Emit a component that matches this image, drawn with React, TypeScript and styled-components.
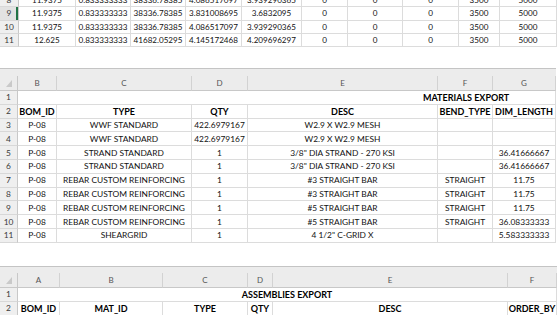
import React from 'react';
import styled, { createGlobalStyle } from 'styled-components';

const GlobalStyle = createGlobalStyle`
  html, body { margin: 0; padding: 0; background: #fff; }
  body { font-family: Lato, "Open Sans", sans-serif; }
`;

const Page = styled.div`
  width: 560px;
  height: 315px;
  overflow: hidden;
  display: flex;
  flex-direction: column;
  background: #fff;
`;

const Sheet = styled.div<{ $cols: string; $rowH: number; $top: number; $head?: string; $size: number }>`
  display: grid;
  grid-template-columns: ${p => p.$cols};
  grid-template-rows: ${p => p.$head ?? 'none'};
  grid-auto-rows: ${p => p.$rowH}px;
  margin-top: ${p => p.$top}px;
  font-size: ${p => p.$size}px;
  color: #111;
  flex-shrink: 0;
`;

const Band = styled.div`
  grid-column: 1 / -1;
  background: #ececec;
  border-top: 1px solid #c4c4c4;
`;

const ColHead = styled.div`
  background: #ececec;
  border-right: 1px solid #d2d2d2;
  border-bottom: 1px solid #c8c8c8;
  color: #555;
  font-size: 8px;
  display: flex;
  align-items: center;
  justify-content: center;
`;

const Corner = styled.div`
  position: relative;
  background: #ececec;
  border-right: 1px solid #c8c8c8;
  border-bottom: 1px solid #c8c8c8;
  &::after {
    content: '';
    position: absolute;
    right: 5px;
    bottom: 3px;
    width: 0;
    height: 0;
    border-left: 6px solid transparent;
    border-bottom: 7px solid #c9c9c9;
  }
`;

const RowHead = styled.div<{ $selected?: boolean }>`
  background: ${p => (p.$selected ? '#e2e2e2' : '#efefef')};
  color: #3a3a3a;
  font-size: 8.4px;
  border-right: 1px solid #c8c8c8;
  border-bottom: 1px solid #d8d8d8;
  box-shadow: ${p => (p.$selected ? 'inset -2px 0 0 #217346' : 'none')};
  display: flex;
  align-items: center;
  justify-content: center;
`;

const Cell = styled.div<{ $bold?: boolean; $span?: string; $pad?: number; $align?: string }>`
  grid-column: ${p => p.$span ?? 'auto'};
  border-right: 1px solid #dcdcdc;
  border-bottom: 1px solid #dcdcdc;
  display: flex;
  align-items: center;
  justify-content: ${p => p.$align ?? 'center'};
  padding-left: ${p => p.$pad ?? 0}px;
  white-space: nowrap;
  overflow: visible;
  font-weight: ${p => (p.$bold ? 700 : 400)};
  font-size: ${p => (p.$bold ? '9px' : 'inherit')};
  color: ${p => (p.$bold ? '#000' : '#111')};
  min-width: 0;
`;

const sec1Rows: string[][] = [
  ['8', '11.9375', '0.833333333', '38336.78385', '4.086517097', '3.939290365', '0', '0', '0', '3500', '5000'],
  ['9', '11.9375', '0.833333333', '38336.78385', '3.831008695', '3.6832095', '0', '0', '0', '3500', '5000'],
  ['10', '11.9375', '0.833333333', '38336.78385', '4.086517097', '3.939290365', '0', '0', '0', '3500', '5000'],
  ['11', '12.625', '0.833333333', '41682.05295', '4.145172468', '4.209696297', '0', '0', '0', '3500', '5000'],
];

const sec2Cols = ['B', 'C', 'D', 'E', 'F', 'G'];
const sec2Heads = ['BOM_ID', 'TYPE', 'QTY', 'DESC', 'BEND_TYPE', 'DIM_LENGTH'];
const sec2Rows: string[][] = [
  ['3', 'P-08', 'WWF STANDARD', '422.6979167', 'W2.9 X W2.9 MESH', '', ''],
  ['4', 'P-08', 'WWF STANDARD', '422.6979167', 'W2.9 X W2.9 MESH', '', ''],
  ['5', 'P-08', 'STRAND STANDARD', '1', '3/8" DIA STRAND - 270 KSI', '', '36.41666667'],
  ['6', 'P-08', 'STRAND STANDARD', '1', '3/8" DIA STRAND - 270 KSI', '', '36.41666667'],
  ['7', 'P-08', 'REBAR CUSTOM REINFORCING', '1', '#3 STRAIGHT BAR', 'STRAIGHT', '11.75'],
  ['8', 'P-08', 'REBAR CUSTOM REINFORCING', '1', '#3 STRAIGHT BAR', 'STRAIGHT', '11.75'],
  ['9', 'P-08', 'REBAR CUSTOM REINFORCING', '1', '#5 STRAIGHT BAR', 'STRAIGHT', '11.75'],
  ['10', 'P-08', 'REBAR CUSTOM REINFORCING', '1', '#5 STRAIGHT BAR', 'STRAIGHT', '36.08333333'],
  ['11', 'P-08', 'SHEARGRID', '1', '4 1/2" C-GRID X', '', '5.583333333'],
];

const sec3Cols = ['A', 'B', 'C', 'D', 'E', 'F'];
const sec3Heads = ['BOM_ID', 'MAT_ID', 'TYPE', 'QTY', 'DESC', 'ORDER_BY'];

export default function App() {
  return (
    <>
      <GlobalStyle />
      <Page>
        <Sheet
          $cols="19px 57px 55px 55px 56px 60px 46px 55px 56px 41px 57px"
          $rowH={13.4}
          $top={-6.2}
          $size={8.1}
        >
          {sec1Rows.map(r => (
            <React.Fragment key={r[0]}>
              <RowHead $selected={r[0] === '9'}>{r[0]}</RowHead>
              {r.slice(1).map((v, i) => (
                <Cell key={i}>{v}</Cell>
              ))}
            </React.Fragment>
          ))}
        </Sheet>

        <Sheet
          $cols="18px 39px 135px 56px 190px 55px 63px"
          $rowH={13.8}
          $top={20.6}
          $head="8px 15px"
          $size={8.4}
        >
          <Band />
          <Corner />
          {sec2Cols.map(c => (
            <ColHead key={c}>{c}</ColHead>
          ))}
          <RowHead>1</RowHead>
          <Cell $span="2 / -1" $bold $align="flex-start" $pad={405}>
            MATERIALS EXPORT
          </Cell>
          <RowHead>2</RowHead>
          {sec2Heads.map(h => (
            <Cell key={h} $bold>
              {h}
            </Cell>
          ))}
          {sec2Rows.map(r => (
            <React.Fragment key={r[0]}>
              <RowHead>{r[0]}</RowHead>
              {r.slice(1).map((v, i) => (
                <Cell key={i}>{v}</Cell>
              ))}
            </React.Fragment>
          ))}
        </Sheet>

        <Sheet
          $cols="18px 42px 103px 85px 25px 235px 49px"
          $rowH={14}
          $top={23.2}
          $head="7px 15px"
          $size={8.4}
        >
          <Band />
          <Corner />
          {sec3Cols.map(c => (
            <ColHead key={c}>{c}</ColHead>
          ))}
          <RowHead>1</RowHead>
          <Cell $span="2 / -1" $bold>
            ASSEMBLIES EXPORT
          </Cell>
          <RowHead>2</RowHead>
          {sec3Heads.map(h => (
            <Cell key={h} $bold>
              {h}
            </Cell>
          ))}
        </Sheet>
      </Page>
    </>
  );
}
